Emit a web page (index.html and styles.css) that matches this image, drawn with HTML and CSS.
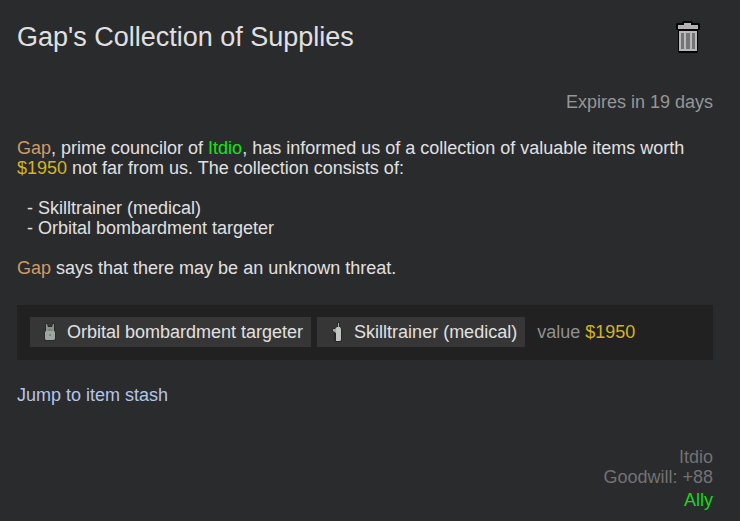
FILE: index.html
```html
<!DOCTYPE html>
<html lang="en">
<head>
	<meta charset="UTF-8">
	<meta name="viewport" content="width=device-width, initial-scale=1">
	<title>Gap's Collection of Supplies</title>
	<link rel="stylesheet" href="styles.css">
</head>
<body>
	<main class="quest">
		<header class="quest-header">
			<h1>Gap's Collection of Supplies</h1>
			<button type="button" class="dismiss" aria-label="Dismiss quest">
				<svg width="28" height="34" viewBox="0 0 28 34" aria-hidden="true">
					<path d="M3 3h5l1-2h9l1 2h6l1 1v5l-1 1h-1v22l-1 1H5l-1-1V10H3l-1-1V4z" fill="#050505"/>
					<path d="M4 5h6V3h7v2h7v4H4z" fill="#b1b0b2"/>
					<path d="M5 11h18v20H5z" fill="#b9b8ba"/>
					<path d="M7 13h3v16H7zM12 13h4v16h-4zM18 13h3v16h-3z" fill="#757476"/>
				</svg>
			</button>
		</header>
		<p class="expires">Expires in 19 days</p>

		<section class="description">
			<p><span class="person">Gap</span>, prime councilor of <span class="faction">Itdio</span>, has informed us of a collection of valuable items worth <span class="money">$1950</span> not far from us. The collection consists of:</p>
			<ul>
				<li>- Skilltrainer (medical)</li>
				<li>- Orbital bombardment targeter</li>
			</ul>
			<p><span class="person">Gap</span> says that there may be an unknown threat.</p>
		</section>

		<section class="rewards">
			<button type="button" class="item">
				<svg width="20" height="20" viewBox="0 0 20 20" aria-hidden="true">
					<path d="M5 1h3v3h4V1h3v8l1 2v7l-2 1H6l-2-1v-7l1-2z" fill="#2a2c2b"/>
					<path d="M6 2h1l1 3h4l1-3h1v8H6z" fill="#8b918e"/>
					<path d="M6 9h8l1 1v7l-1 1H6l-1-1v-7z" fill="#a0a5a2"/>
					<path d="M8 7h4v2H8zM9 12h2v2H9z" fill="#7d827f"/>
				</svg>
				Orbital bombardment targeter
			</button>
			<button type="button" class="item">
				<svg width="20" height="20" viewBox="0 0 20 20" aria-hidden="true">
					<path d="M10 0h3v5l2 2v11l-2 2H9l-2-2v-7l-2-2 1-3h4z" fill="#262827"/>
					<path d="M11 1h1v5h-1z" fill="#a4a9a7"/>
					<path d="M8 7l2-2h3l1 2v11l-1 1H9V9z" fill="#c1c4c1"/>
					<path d="M6 7h3v4L6 9z" fill="#a3a7a4"/>
				</svg>
				Skilltrainer (medical)
			</button>
			<span class="value">value <span class="money">$1950</span></span>
		</section>

		<a href="#stash" class="jump">Jump to item stash</a>

		<footer class="relations">
			<p>Itdio</p>
			<p>Goodwill: +88</p>
			<p class="ally">Ally</p>
		</footer>
	</main>
</body>
</html>
```
FILE: styles.css
```css
*{
	margin: 0;
	padding: 0;
	box-sizing: border-box;
}
body{
	background-color: #2a2b2d;
	color: #e0e0e0;
	font-family: "Liberation Sans", Arial, sans-serif;
	font-size: 18px;
	line-height: 20px;
}
button{
	border: none;
	background: none;
	color: inherit;
	font: inherit;
	cursor: pointer;
}
.quest{
	padding: 20px 27px 10px 17px;
}
.quest-header{
	display: flex;
	justify-content: space-between;
	align-items: center;
	padding-right: 11px;
}
.quest-header h1{
	font-size: 27px;
	font-weight: normal;
	line-height: 32px;
}
.dismiss svg,
.item svg{
	display: block;
}
.expires{
	margin-top: 38px;
	color: #969696;
	text-align: right;
}
.description{
	margin-top: 26px;
}
.description ul{
	margin: 20px 0;
	padding-left: 10px;
	list-style: none;
}
.person{
	color: #cf9b65;
}
.faction{
	color: #10e710;
}
.money{
	color: #d2b423;
}
.rewards{
	display: flex;
	flex-wrap: wrap;
	align-items: center;
	gap: 6px;
	margin-top: 27px;
	padding: 12px 13px 13px;
	background-color: #212121;
}
.item{
	display: flex;
	align-items: center;
	gap: 7px;
	height: 30px;
	padding: 0 8px 0 10px;
	background-color: #363636;
}
.value{
	margin-left: 6px;
	color: #8f8f8f;
}
.jump{
	display: inline-block;
	margin-top: 25px;
	color: #b5c5e6;
	text-decoration: none;
}
.relations{
	margin-top: 42px;
	color: #727274;
	text-align: right;
}
.relations .ally{
	margin-top: 3px;
	color: #16d916;
}
```
